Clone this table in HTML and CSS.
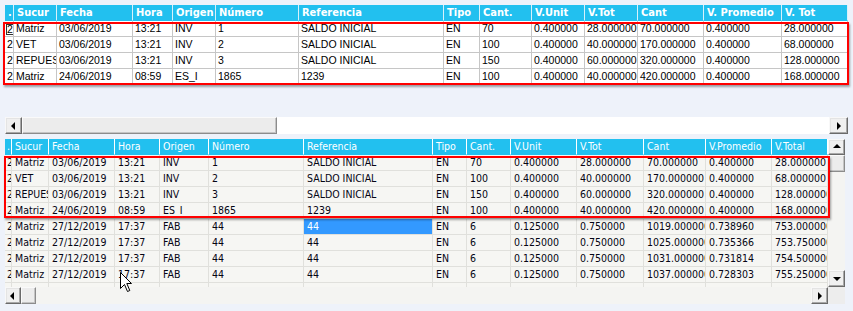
FILE: index.html
```html
<!DOCTYPE html>
<html>
<head>
<meta charset="utf-8">
<link rel="stylesheet" href="styles.css">
</head>
<body>
<div class="page">
  <section class="top">
    <div class="grid top-grid">
      <span class="cell hd">.</span><span class="cell hd">Sucur</span><span class="cell hd">Fecha</span><span class="cell hd">Hora</span><span class="cell hd">Origen</span><span class="cell hd">Número</span><span class="cell hd">Referencia</span><span class="cell hd">Tipo</span><span class="cell hd">Cant.</span><span class="cell hd">V.Unit</span><span class="cell hd">V.Tot</span><span class="cell hd">Cant</span><span class="cell hd">V. Promedio</span><span class="cell hd">V. Tot</span>

      <span class="cell c0"><i class="foc">2</i></span><span class="cell">Matriz</span><span class="cell">03/06/2019</span><span class="cell">13:21</span><span class="cell">INV</span><span class="cell">1</span><span class="cell">SALDO INICIAL</span><span class="cell">EN</span><span class="cell">70</span><span class="cell">0.400000</span><span class="cell">28.000000</span><span class="cell">70.000000</span><span class="cell">0.400000</span><span class="cell">28.000000</span>

      <span class="cell c0">2</span><span class="cell">VET</span><span class="cell">03/06/2019</span><span class="cell">13:21</span><span class="cell">INV</span><span class="cell">2</span><span class="cell">SALDO INICIAL</span><span class="cell">EN</span><span class="cell">100</span><span class="cell">0.400000</span><span class="cell">40.000000</span><span class="cell">170.000000</span><span class="cell">0.400000</span><span class="cell">68.000000</span>

      <span class="cell c0">2</span><span class="cell">REPUES</span><span class="cell">03/06/2019</span><span class="cell">13:21</span><span class="cell">INV</span><span class="cell">3</span><span class="cell">SALDO INICIAL</span><span class="cell">EN</span><span class="cell">150</span><span class="cell">0.400000</span><span class="cell">60.000000</span><span class="cell">320.000000</span><span class="cell">0.400000</span><span class="cell">128.000000</span>

      <span class="cell c0">2</span><span class="cell">Matriz</span><span class="cell">24/06/2019</span><span class="cell">08:59</span><span class="cell">ES_I</span><span class="cell">1865</span><span class="cell">1239</span><span class="cell">EN</span><span class="cell">100</span><span class="cell">0.400000</span><span class="cell">40.000000</span><span class="cell">420.000000</span><span class="cell">0.400000</span><span class="cell">168.000000</span>

      <div class="mark mark-top"></div>
    </div>
    <div class="top-empty"></div>
    <div class="hscroll">
      <div class="sbtn arrow-l"></div>
      <div class="thumb top-thumb"></div>
      <div class="track track-white"></div>
      <div class="sbtn arrow-r top-right"></div>
    </div>
  </section>

  <section class="bottom">
    <div class="bottom-main">
      <div class="grid bottom-grid">
        <span class="cell hd">.</span><span class="cell hd">Sucur</span><span class="cell hd">Fecha</span><span class="cell hd">Hora</span><span class="cell hd">Origen</span><span class="cell hd">Número</span><span class="cell hd">Referencia</span><span class="cell hd">Tipo</span><span class="cell hd">Cant.</span><span class="cell hd">V.Unit</span><span class="cell hd">V.Tot</span><span class="cell hd">Cant</span><span class="cell hd">V.Promedio</span><span class="cell hd">V.Total</span>

        <span class="cell">2</span><span class="cell">Matriz</span><span class="cell">03/06/2019</span><span class="cell">13:21</span><span class="cell">INV</span><span class="cell">1</span><span class="cell">SALDO INICIAL</span><span class="cell">EN</span><span class="cell">70</span><span class="cell">0.400000</span><span class="cell">28.000000</span><span class="cell">70.000000</span><span class="cell">0.400000</span><span class="cell">28.000000</span>

        <span class="cell">2</span><span class="cell">VET</span><span class="cell">03/06/2019</span><span class="cell">13:21</span><span class="cell">INV</span><span class="cell">2</span><span class="cell">SALDO INICIAL</span><span class="cell">EN</span><span class="cell">100</span><span class="cell">0.400000</span><span class="cell">40.000000</span><span class="cell">170.000000</span><span class="cell">0.400000</span><span class="cell">68.000000</span>

        <span class="cell">2</span><span class="cell">REPUES</span><span class="cell">03/06/2019</span><span class="cell">13:21</span><span class="cell">INV</span><span class="cell">3</span><span class="cell">SALDO INICIAL</span><span class="cell">EN</span><span class="cell">150</span><span class="cell">0.400000</span><span class="cell">60.000000</span><span class="cell">320.000000</span><span class="cell">0.400000</span><span class="cell">128.000000</span>

        <span class="cell">2</span><span class="cell">Matriz</span><span class="cell">24/06/2019</span><span class="cell">08:59</span><span class="cell">ES_I</span><span class="cell">1865</span><span class="cell">1239</span><span class="cell">EN</span><span class="cell">100</span><span class="cell">0.400000</span><span class="cell">40.000000</span><span class="cell">420.000000</span><span class="cell">0.400000</span><span class="cell">168.000000</span>

        <span class="cell">2</span><span class="cell">Matriz</span><span class="cell">27/12/2019</span><span class="cell">17:37</span><span class="cell">FAB</span><span class="cell">44</span><span class="cell sel">44</span><span class="cell">EN</span><span class="cell">6</span><span class="cell">0.125000</span><span class="cell">0.750000</span><span class="cell">1019.000000</span><span class="cell">0.738960</span><span class="cell">753.000000</span>

        <span class="cell">2</span><span class="cell">Matriz</span><span class="cell">27/12/2019</span><span class="cell">17:37</span><span class="cell">FAB</span><span class="cell">44</span><span class="cell">44</span><span class="cell">EN</span><span class="cell">6</span><span class="cell">0.125000</span><span class="cell">0.750000</span><span class="cell">1025.000000</span><span class="cell">0.735366</span><span class="cell">753.750000</span>

        <span class="cell">2</span><span class="cell">Matriz</span><span class="cell">27/12/2019</span><span class="cell">17:37</span><span class="cell">FAB</span><span class="cell">44</span><span class="cell">44</span><span class="cell">EN</span><span class="cell">6</span><span class="cell">0.125000</span><span class="cell">0.750000</span><span class="cell">1031.000000</span><span class="cell">0.731814</span><span class="cell">754.500000</span>

        <span class="cell">2</span><span class="cell">Matriz</span><span class="cell">27/12/2019</span><span class="cell">17:37</span><span class="cell">FAB</span><span class="cell">44</span><span class="cell">44</span><span class="cell">EN</span><span class="cell">6</span><span class="cell">0.125000</span><span class="cell">0.750000</span><span class="cell">1037.000000</span><span class="cell">0.728303</span><span class="cell">755.250000</span>

        <span class="cell"></span><span class="cell"></span><span class="cell"></span><span class="cell"></span><span class="cell"></span><span class="cell"></span><span class="cell"></span><span class="cell"></span><span class="cell"></span><span class="cell"></span><span class="cell"></span><span class="cell"></span><span class="cell"></span><span class="cell"></span>
      </div>
      <div class="vscroll">
        <div class="sbtn arrow-u"></div>
        <div class="thumb vthumb"></div>
        <div class="track track-grey"></div>
        <div class="sbtn arrow-d"></div>
      </div>
      <div class="mark mark-bottom"></div>
    </div>
    <div class="hscroll">
      <div class="sbtn arrow-l bl"></div>
      <div class="thumb bthumb"></div>
      <div class="track track-grey"></div>
      <div class="sbtn arrow-r br"></div>
      <div class="corner"></div>
    </div>
  </section>

  <svg class="cursor" width="13" height="21" viewBox="0 0 13 21">
    <path d="M0.5 0.5 L0.5 16.5 L4.5 12.5 L7.5 19.5 L9.8 18.5 L6.8 11.5 L11.5 11.5 Z" fill="#fff" stroke="#000" stroke-width="1" stroke-linejoin="miter"/>
  </svg>
</div>
</body>
</html>
```

FILE: styles.css
```css
* { box-sizing: border-box; margin: 0; padding: 0; }

body {
  width: 853px;
  height: 311px;
  overflow: hidden;
  background: #eef2fa;
  font-family: "Liberation Sans", Arial, sans-serif;
}

.page {
  position: relative;
  height: 311px;
  padding: 5px 0 0 5px;
}

/* ---------- top grid ---------- */
.top {
  width: 843px;
  height: 129px;
  display: flex;
  flex-direction: column;
}

.grid {
  display: grid;
  position: relative;
  grid-auto-rows: 16px;
  align-content: start;
}

.top-grid {
  grid-template-columns: 9px 43px 76px 40px 43px 83px 145px 36px 52px 53px 53px 66px 78px 66px;
  background: #fff;
}

.cell {
  display: block;
  border-right: 1px solid #c6c6c6;
  border-bottom: 1px solid #c6c6c6;
  padding-left: 2px;
  white-space: nowrap;
  overflow: hidden;
  line-height: 15px;
  font-size: 10.5px;
  color: #000;
  font-style: normal;
}

.hd {
  background: #22c0ef;
  color: #fff;
  border-right: 1px solid #d8f1fb;
  border-bottom: 1px solid #22c0ef;
  padding-left: 3px;
}

.top-grid .hd {
  font-family: "DejaVu Sans Condensed", "DejaVu Sans", sans-serif;
  font-stretch: condensed;
  font-weight: bold;
  font-size: 11px;
}

.c0 { padding-left: 2px; }

.foc {
  display: inline-block;
  font-style: normal;
  border: 1px solid #333;
  line-height: 9px;
  height: 11px;
  margin-left: -1px;
  vertical-align: middle;
}

.top-empty { flex: 1; }

/* ---------- scrollbars ---------- */
.hscroll {
  display: flex;
  height: 17px;
}

.sbtn {
  width: 17px;
  flex: none;
  background: #f0f0f0;
  border: 1px solid;
  border-color: #f8f8f8 #6a6a6a #6a6a6a #f8f8f8;
  box-shadow: inset -1px -1px #a8a8a8, inset 1px 1px #e4e4e4;
  display: flex;
  align-items: center;
  justify-content: center;
}

.sbtn::before {
  content: "";
  width: 0;
  height: 0;
  border: 4px solid transparent;
}

.arrow-l::before { border-right-color: #000; border-left-width: 0; margin-left: -2px; }
.arrow-r::before { border-left-color: #000; border-right-width: 0; margin-left: 1px; }
.arrow-u::before { border-bottom-color: #000; border-top-width: 0; margin-top: -2px; }
.arrow-d::before { border-top-color: #000; border-bottom-width: 0; margin-top: 1px; }

.top-right { width: 19px; }

.thumb {
  flex: none;
  background: #ececec;
  border: 1px solid;
  border-color: #fafafa #8c8c8c #8c8c8c #fafafa;
  box-shadow: inset -1px -1px #c4c4c4;
}

.top-thumb { width: 255px; }

.track { flex: 1; }
.track-white { background: #fff; }
.track-grey { background: #f4f4f2; }

/* ---------- bottom grid ---------- */
.bottom {
  margin-top: 5px;
  width: 840px;
}

.bottom-main {
  position: relative;
  display: flex;
  height: 148px;
}

.bottom-grid {
  width: 823px;
  flex: none;
  overflow: hidden;
  grid-template-columns: 7px 37px 66px 45px 49px 95px 129px 34px 44px 66px 67px 62px 66px 56px;
  background: #f6f6f3;
}

.bottom-grid .cell {
  font-family: "DejaVu Sans Condensed", "DejaVu Sans", sans-serif;
  font-stretch: condensed;
  font-size: 10.5px;
  border-color: #e0e0dc;
  padding-left: 3px;
  color: #050514;
}

.bottom-grid .hd {
  color: #fff;
  border-right-color: #ffffff;
  border-bottom-color: #22c0ef;
}

.bottom-grid .cell:nth-child(14n+1) { padding-left: 2px; }

.bottom-grid .sel {
  background: #3399ff;
  color: #fff;
}

.vscroll {
  width: 17px;
  flex: none;
  display: flex;
  flex-direction: column;
  background: #f4f4f2;
}

.vscroll .sbtn { width: 17px; height: 16px; }
.vscroll .arrow-d { height: 17px; }
.vthumb { height: 17px; }

.bl { width: 16px; }
.bthumb { width: 15px; }
.br { width: 17px; }
.corner { width: 17px; background: #ededed; }

/* ---------- annotations ---------- */
.mark {
  position: absolute;
  border: 2px solid #f00;
  box-shadow: 1px 2px 2px rgba(0, 0, 0, 0.35);
  pointer-events: none;
}

.mark-top {
  left: -2px;
  top: 17px;
  width: 846px;
  height: 63px;
}

.mark-bottom {
  left: -1px;
  top: 17px;
  width: 826px;
  height: 62px;
}

.cursor {
  position: absolute;
  left: 120px;
  top: 272px;
}
```
